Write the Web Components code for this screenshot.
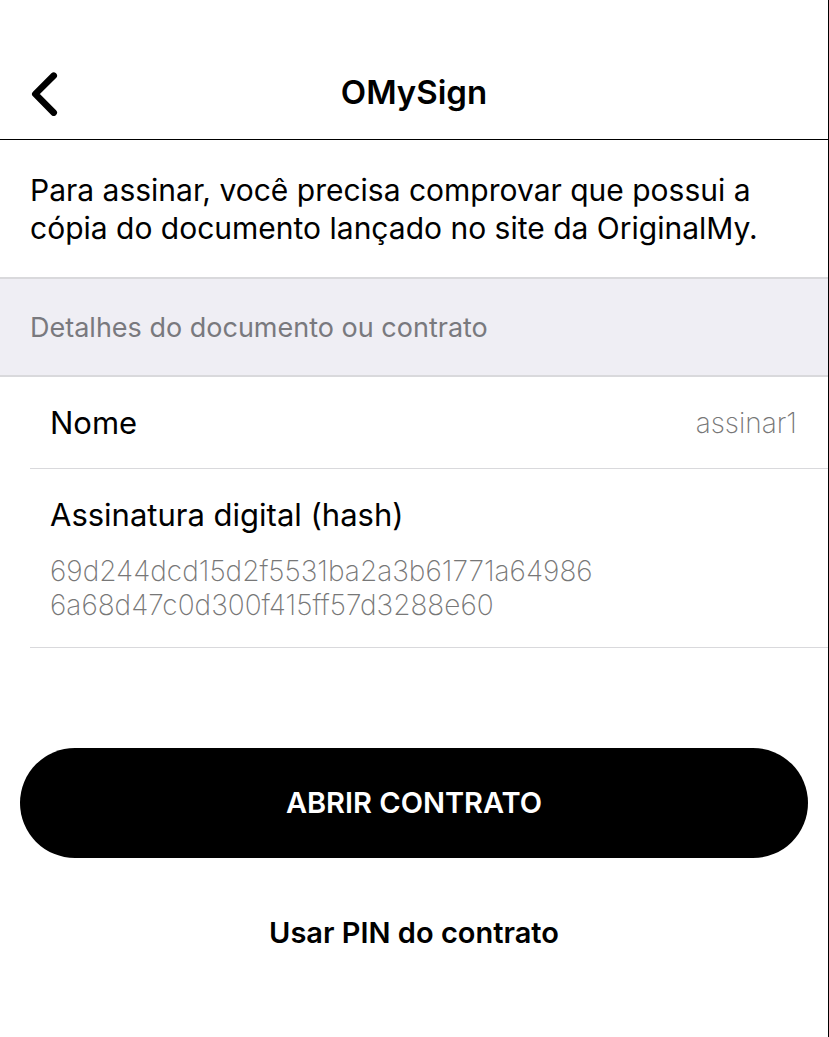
<!DOCTYPE html>
<html lang="pt-BR">
<head>
<meta charset="utf-8">
<meta name="viewport" content="width=device-width, initial-scale=1">
<title>OMySign</title>
<style>
html, body { margin: 0; background: #fff; }
body { font-family: Inter, "Liberation Sans", sans-serif; color: #000; }
</style>
</head>
<body>
<sign-screen>
  <nav-bar slot="header">OMySign</nav-bar>
  <intro-text>Para assinar, você precisa comprovar que possui a cópia do documento lançado no site da OriginalMy.</intro-text>
  <section-title>Detalhes do documento ou contrato</section-title>
  <detail-row>Nome<span slot="value">assinar1</span></detail-row>
  <detail-row stacked>Assinatura digital (hash)<span slot="value">69d244dcd15d2f5531ba2a3b61771a64986<br>6a68d47c0d300f415ff57d3288e60</span></detail-row>
  <action-group>
    <action-button>ABRIR CONTRATO</action-button>
    <action-button plain>Usar PIN do contrato</action-button>
  </action-group>
</sign-screen>
<script>
const define = (name, html) => {
  const template = document.createElement('template');
  template.innerHTML = html;
  customElements.define(name, class extends HTMLElement {
    constructor() {
      super();
      this.attachShadow({ mode: 'open' }).append(template.content.cloneNode(true));
    }
  });
};

define('sign-screen', `
<style>
:host { display: flex; flex-direction: column; box-sizing: border-box; min-height: 100vh; border-right: 1px solid #000; background: #fff; }
main { display: flex; flex-direction: column; }
</style>
<slot name="header"></slot><main><slot></slot></main>`);

define('nav-bar', `
<style>
:host { display: block; border-bottom: 1px solid #000; }
header { display: grid; grid-template-columns: 60px 1fr 60px; align-items: center; padding: 66px 0 21px; }
button { display: flex; height: 52px; padding: 0 0 0 30px; border: 0; background: none; align-items: center; }
svg { display: block; flex: none; }
h1 { margin: 0; text-align: center; font-size: 33px; line-height: 48px; font-weight: 600; }
</style>
<header>
<button type="button" aria-label="Voltar"><svg width="30" height="48" viewBox="0 0 30 48" fill="none" stroke="#000" stroke-width="6.6" stroke-linecap="round" stroke-linejoin="round"><path d="M23.700 7.700 5.300 26 23.700 44.600"/></svg></button>
<h1><slot></slot></h1>
</header>`);

define('intro-text', `
<style>
:host { display: block; padding: 31px 30px 30px; }
p { margin: 0; font-size: 30px; line-height: 38px; }
</style>
<p><slot></slot></p>`);

define('section-title', `
<style>
:host { display: block; padding: 31px 30px 29px; background: #efeef4; border: solid #d9d9dc; border-width: 2px 0; }
h2 { margin: 0; font-size: 27px; line-height: 36px; font-weight: 400; color: #79797e; }
</style>
<h2><slot></slot></h2>`);

define('detail-row', `
<style>
:host { display: flex; justify-content: space-between; align-items: center; margin-left: 30px; padding: 27px 31px 26px 20px; border-bottom: 1px solid #d9d9dc; }
:host([stacked]) { flex-direction: column; align-items: flex-start; gap: 20px; padding-bottom: 25px; }
.label { font-size: 31px; line-height: 38px; }
.value { font-size: 28px; line-height: 34px; font-weight: 200; color: #777; }
</style>
<span class="label"><slot></slot></span><span class="value"><slot name="value"></slot></span>`);

define('action-group', `
<style>
:host { display: flex; flex-direction: column; gap: 20px; padding: 100px 20px 20px; }
</style>
<slot></slot>`);

define('action-button', `
<style>
:host { display: block; }
button { display: block; width: 100%; height: 110px; border: 0; border-radius: 55px; background: #000; color: #fff; font: 600 29px/36px Inter, "Liberation Sans", sans-serif; }
:host([plain]) button { background: none; color: #000; }
</style>
<button type="button"><slot></slot></button>`);
</script>
</body>
</html>
